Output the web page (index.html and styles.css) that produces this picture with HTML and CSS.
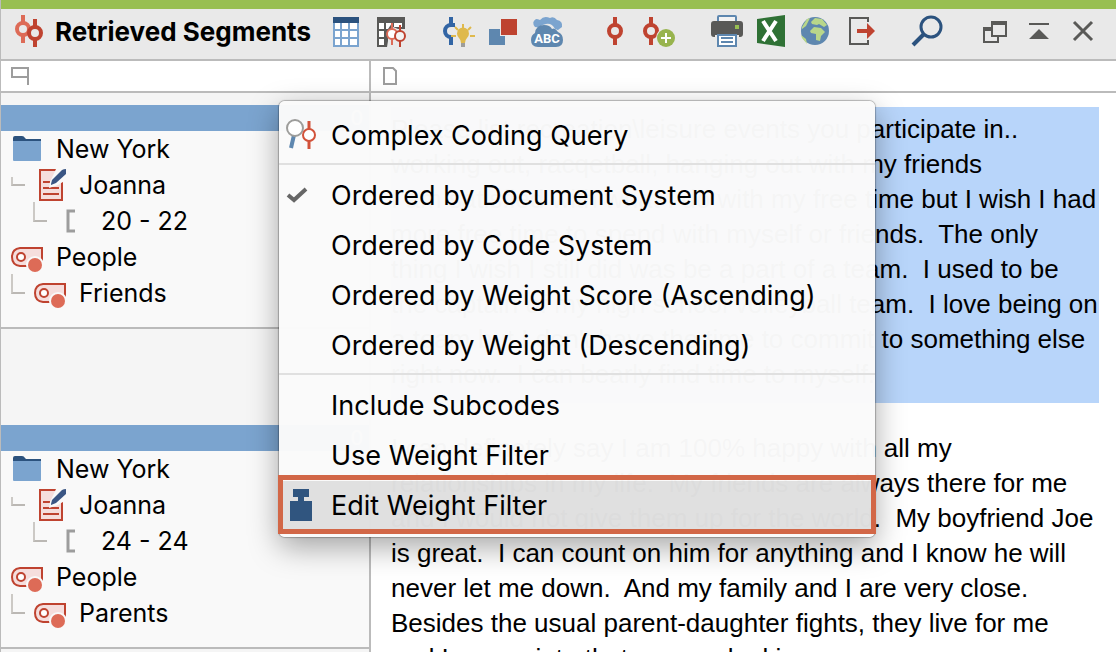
FILE: index.html
```html
<!DOCTYPE html>
<html lang="en">
<head>
    <meta charset="UTF-8">
    <meta name="viewport" content="width=device-width, initial-scale=1.0">
    <title>Retrieved Segments</title>
    <link rel="stylesheet" href="styles.css">
</head>
<body>
    <!-- shared icons -->
    <svg class="sprite" aria-hidden="true">
        <symbol id="folder" viewBox="0 0 32 32">
            <path d="M2 10V5q0-2 2-2h7q2 0 3 2l1 1h15v4z" fill="#2b527e"/>
            <path d="M2 8h28v19q0 1-1 1H3q-1 0-1-1z" fill="#7ba4cf"/>
        </symbol>
        <symbol id="document" viewBox="0 0 32 32">
            <path d="M6 1h22v30H6z" fill="#f5dedd" stroke="#bf4330" stroke-width="2"/>
            <path d="M9 13h7M9 19h16M9 25h16" stroke="#bf4330" stroke-width="2"/>
            <path d="M22 0h10v11l-8 5-9 3 1-6z" fill="#f9f9f9"/>
            <path d="M17 15l1-4L28 1q2-1 5-1v4L22 14l-5 2z" fill="#3b5684"/>
        </symbol>
        <symbol id="code" viewBox="0 0 32 32">
            <path d="M9 7h22v18H9q-8-1-8-9t8-9z" fill="#f5dedd" stroke="#bf4330" stroke-width="2"/>
            <circle cx="10" cy="16" r="4" fill="#fff" stroke="#bf4330" stroke-width="2"/>
            <circle cx="24" cy="24" r="9" fill="#f9f9f9"/>
            <circle cx="24" cy="24" r="7" fill="#dd6b57"/>
        </symbol>
        <symbol id="bracket" viewBox="0 0 32 32">
            <path d="M19 6h-7v20h7" fill="none" stroke="#9d9d9d" stroke-width="3"/>
        </symbol>
    </svg>

    <div class="app">
        <header class="toolbar">
            <div class="title">
                <svg width="32" height="32" viewBox="0 0 32 32" fill="none" stroke-width="4">
                    <path d="M10 0v8M10 20v8" stroke="#dd6b57"/>
                    <circle cx="10" cy="14" r="6" stroke="#dd6b57"/>
                    <path d="M22 4v8M22 24v8" stroke="#bf4330"/>
                    <circle cx="22" cy="18" r="6" stroke="#bf4330"/>
                </svg>
                <h1>Retrieved Segments</h1>
            </div>
            <div class="group">
                <button type="button" aria-label="Table">
                    <svg viewBox="0 0 32 32">
                        <path d="M2 4h26v28H2z" fill="#7ba4cf"/>
                        <path d="M2 2h26v6H2z" fill="#2b527e"/>
                        <path d="M4 8h5v6H4zM11 8h6v6h-6zM19 8h7v6h-7zM4 16h5v6H4zM11 16h6v6h-6zM19 16h7v6h-7zM4 24h5v6H4zM11 24h6v6h-6zM19 24h7v6h-7z" fill="#fff"/>
                    </svg>
                </button>
                <button type="button" aria-label="Code table">
                    <svg viewBox="0 0 32 32">
                        <path d="M2 2h28v12h-7l-5-2-5 6v8l-1 6H2z" fill="#595957"/>
                        <path d="M4 8h5v6H4zM11 8h6l-4 6h-2zM19 8h8v4h-8zM4 16h5v6H4zM4 24h5v6H4z" fill="#fff"/>
                        <path d="M17 8v6M17 24v6" stroke="#dd6b57" stroke-width="2"/>
                        <circle cx="17" cy="19" r="5" fill="#fff" stroke="#dd6b57" stroke-width="2"/>
                        <path d="M25 10v6M25 26v6" stroke="#bf4330" stroke-width="2"/>
                        <circle cx="25" cy="21" r="5" fill="#f4f4f4" stroke="#bf4330" stroke-width="2"/>
                    </svg>
                </button>
            </div>
            <div class="group">
                <button type="button" aria-label="Suggest codes">
                    <svg viewBox="0 0 32 32">
                        <path d="M8 2v8M8 22v8" stroke="#3265a4" stroke-width="4"/>
                        <path d="M12 10H8a6 6 0 0 0 0 12" fill="none" stroke="#3265a4" stroke-width="4"/>
                        <circle cx="20" cy="20" r="8" fill="#e9e9e9"/>
                        <path d="M20 9v5M12 12l3 3M28 12l-3 3M8 21h5M27 21h5" stroke="#dfb94c" stroke-width="2"/>
                        <path d="M18 28q0-3-2-5a6 6 0 1 1 8 0q-2 2-2 5z" fill="#dfb94c"/>
                        <path d="M18 28h4v4h-4z" fill="#9d9d9b"/>
                    </svg>
                </button>
                <button type="button" aria-label="Overlap">
                    <svg viewBox="0 0 32 32">
                        <path d="M2 14h16v16H2z" fill="#5e87af"/>
                        <path d="M13 3h18v18H13z" fill="#e9e9e9"/>
                        <path d="M14 4h16v16H14z" fill="#be4330"/>
                    </svg>
                </button>
                <button type="button" aria-label="Word cloud">
                    <svg viewBox="0 0 32 32">
                        <path d="M4 12q-4-5 1-8 2 0 4 1 4-5 10-2 4-2 7 2 6 1 5 7l-4 3z" fill="#7ba4cf"/>
                        <path d="M7 17q0-7 8-8 6-1 9 5 7 2 7 9v6H5z" fill="#e9e9e9"/>
                        <path d="M4 18q1-8 9-8 6 0 8 4 3-2 6 3 5 2 5 8 0 7-7 7H7q-7 0-7-7 0-5 4-7z" fill="#5e87af"/>
                        <text x="16" y="28" class="cloud-text">ABC</text>
                    </svg>
                </button>
            </div>
            <div class="group">
                <button type="button" aria-label="Code">
                    <svg viewBox="0 0 32 32" fill="none" stroke="#bf4330" stroke-width="4">
                        <path d="M16 2v8M16 22v8"/>
                        <circle cx="16" cy="16" r="6"/>
                    </svg>
                </button>
                <button type="button" aria-label="Add code">
                    <svg viewBox="0 0 32 32">
                        <path d="M8 2v8M8 22v8" stroke="#bf4330" stroke-width="4"/>
                        <circle cx="8" cy="16" r="6" fill="none" stroke="#bf4330" stroke-width="4"/>
                        <circle cx="23" cy="23" r="10" fill="#e9e9e9"/>
                        <circle cx="23" cy="23" r="9" fill="#98b44e"/>
                        <path d="M18 23h10M23 18v10" stroke="#fff" stroke-width="2"/>
                    </svg>
                </button>
            </div>
            <div class="group">
                <button type="button" aria-label="Print">
                    <svg viewBox="0 0 32 32">
                        <rect x="7" y="1" width="18" height="12" rx="1" fill="#f3f3f3" stroke="#5e87af" stroke-width="2"/>
                        <path d="M3 6h26q3 0 3 3v10q0 3-3 3h-1v-2H4v2H3q-3 0-3-3V9q0-3 3-3z" fill="#595957"/>
                        <path d="M24 10h4v4h-4z" fill="#98bf52"/>
                        <rect x="7" y="20" width="18" height="11" fill="#fff" stroke="#5e87af" stroke-width="2"/>
                        <path d="M10 23h12M10 27h12" stroke="#5e87af" stroke-width="2"/>
                    </svg>
                </button>
                <button type="button" aria-label="Export to Excel">
                    <svg viewBox="0 0 32 32">
                        <path d="M2 4L30 0v32L2 28z" fill="#2f7135"/>
                        <path d="M8 6l13 20M21 6L8 26" stroke="#fff" stroke-width="4"/>
                    </svg>
                </button>
                <button type="button" aria-label="Export to web">
                    <svg viewBox="0 0 32 32">
                        <circle cx="16" cy="16" r="14" fill="#5e87af"/>
                        <path d="M12 7l4-4 7 1 5 6-3 2-5-3-2 1-5-1zM11 16l4-4 7 1 4 4-4 4-1 5-4-1v-6l-5-1zM3 12l5-8 3-1-4 8-4 3zM2 20l5 4 1 5-5-6z" fill="#b9d78a"/>
                    </svg>
                </button>
                <button type="button" aria-label="Export">
                    <svg viewBox="0 0 32 32">
                        <path d="M25 7V3H7v26h18v-4" fill="none" stroke="#595957" stroke-width="2"/>
                        <path d="M14 14h10V8l8 8-8 8v-6H14z" fill="#bf4330"/>
                    </svg>
                </button>
            </div>
            <div class="group">
                <button type="button" aria-label="Search">
                    <svg viewBox="0 0 32 32" fill="none" stroke="#2b527e">
                        <circle cx="20" cy="12" r="10" stroke-width="3"/>
                        <path d="M13 19L2 30" stroke-width="4"/>
                    </svg>
                </button>
            </div>
            <div class="group">
                <button type="button" aria-label="Undock">
                    <svg viewBox="0 0 32 32" fill="#595957">
                        <path d="M4 12h8v4H6v10h12v-4h2v6H4z"/>
                        <path d="M12 6h16v16H12zM14 10v10h12V10z" fill-rule="evenodd"/>
                    </svg>
                </button>
                <button type="button" aria-label="Collapse">
                    <svg viewBox="0 0 32 32" fill="#595957">
                        <path d="M6 8h20v2H6zM16 14l10 10H6z"/>
                    </svg>
                </button>
                <button type="button" aria-label="Close">
                    <svg viewBox="0 0 32 32" stroke="#595957" stroke-width="3">
                        <path d="M7 7l18 18M25 7L7 25"/>
                    </svg>
                </button>
            </div>
        </header>

        <main class="panes">
            <aside class="sidebar">
                <div class="pane-head">
                    <svg width="18" height="18" viewBox="0 0 18 18" fill="none" stroke="#9d9d9d" stroke-width="2">
                        <path d="M17 18V1H1v9h16"/>
                    </svg>
                </div>
                <div class="segments">
                    <section class="segment">
                        <div class="segment-bar">0</div>
                        <ul>
                            <li><svg class="icon"><use href="#folder"/></svg>New York</li>
                            <li class="level-1 short"><svg class="icon"><use href="#document"/></svg>Joanna</li>
                            <li class="level-2"><svg class="icon"><use href="#bracket"/></svg>20 - 22</li>
                            <li><svg class="icon"><use href="#code"/></svg>People</li>
                            <li class="level-1"><svg class="icon"><use href="#code"/></svg>Friends</li>
                        </ul>
                    </section>
                    <section class="segment">
                        <div class="segment-bar">0</div>
                        <ul>
                            <li><svg class="icon"><use href="#folder"/></svg>New York</li>
                            <li class="level-1 short"><svg class="icon"><use href="#document"/></svg>Joanna</li>
                            <li class="level-2"><svg class="icon"><use href="#bracket"/></svg>24 - 24</li>
                            <li><svg class="icon"><use href="#code"/></svg>People</li>
                            <li class="level-1"><svg class="icon"><use href="#code"/></svg>Parents</li>
                        </ul>
                    </section>
                </div>
            </aside>

            <article class="content">
                <div class="pane-head">
                    <svg width="14" height="18" viewBox="0 0 14 18" fill="none" stroke="#9d9d9d" stroke-width="2">
                        <path d="M1 1h9l3 3v13H1z"/>
                    </svg>
                </div>
                <div class="text">
                    <p class="selected">Please list recreation\leisure events you participate in..<br>
                    working out, racqetball, hanging out with my friends<br>
                    I am satisfied with what I do with my free time but I wish I had<br>
                    more free time to spend with myself or friends.&nbsp; The only<br>
                    thing I wish I still did was be a part of a team.&nbsp; I used to be<br>
                    the captain of my high school volleyball team.&nbsp; I love being on<br>
                    a team but I don't have the time to commit to something else<br>
                    right now.&nbsp; I can bearly find time to myself.</p>
                    <p>I can definetely say I am 100% happy with all my<br>
                    relationships in my life.&nbsp; My friends are always there for me<br>
                    and I would not give them up for the world.&nbsp; My boyfriend Joe<br>
                    is great.&nbsp; I can count on him for anything and I know he will<br>
                    never let me down.&nbsp; And my family and I are very close.<br>
                    Besides the usual parent-daughter fights, they live for me<br>
                    and I appreciate that anyone looking</p>
                </div>
            </article>
        </main>

        <div class="menu" role="menu">
            <button type="button" role="menuitem">
                <svg viewBox="0 0 32 32">
                    <path d="M8 16L5 29" stroke="#5e87af" stroke-width="4"/>
                    <circle cx="9" cy="9" r="8" fill="#fff" stroke="#9d9d9b" stroke-width="2"/>
                    <path d="M23 2v8M23 22v8" stroke="#d2523a" stroke-width="3"/>
                    <circle cx="23" cy="16" r="6" fill="#fff" stroke="#d2523a" stroke-width="2"/>
                </svg>
                Complex Coding Query
            </button>
            <hr>
            <button type="button" role="menuitem">
                <svg viewBox="0 0 32 32">
                    <path d="M2 16l6 5L20 10" fill="none" stroke="#666" stroke-width="4"/>
                </svg>
                Ordered by Document System
            </button>
            <button type="button" role="menuitem">Ordered by Code System</button>
            <button type="button" role="menuitem">Ordered by Weight Score (Ascending)</button>
            <button type="button" role="menuitem">Ordered by Weight (Descending)</button>
            <hr>
            <button type="button" role="menuitem">Include Subcodes</button>
            <button type="button" role="menuitem">Use Weight Filter</button>
            <button type="button" role="menuitem" class="active">
                <svg viewBox="0 0 32 32" fill="#30557f">
                    <path d="M7 0h16v8h-5v4h8v20H4V12h8V8H7z"/>
                </svg>
                Edit Weight Filter
            </button>
        </div>
    </div>
</body>
</html>
```
FILE: styles.css
```css
* {
    box-sizing: border-box;
}
body {
    margin: 0;
    font-family: Inter, sans-serif;
    font-size: 25px;
    color: #000;
    background: #fff;
}
button {
    border: none;
    padding: 0;
    background: none;
    font: inherit;
    color: inherit;
}
.sprite {
    display: none;
}
.app {
    position: relative;
    display: flex;
    flex-direction: column;
    height: 100vh;
    overflow: hidden;
    border-left: 1px solid #bbb;
}

/* toolbar */
.toolbar {
    display: flex;
    gap: 24px;
    padding: 0 11px 6px 12px;
    border-top: 9px solid #98bf52;
    border-bottom: 2px solid #bbb;
    background: #e9e9e9;
}
.title {
    display: flex;
    flex: 1;
    align-items: center;
    gap: 10px;
    margin-right: -24px;
    white-space: nowrap;
}
h1 {
    margin: 0;
    font-size: 26px;
    font-weight: 700;
}
.group {
    display: flex;
}
.group button {
    display: flex;
    align-items: center;
    justify-content: center;
    width: 44px;
    height: 44px;
}
.group svg {
    width: 32px;
    height: 32px;
}
.cloud-text {
    font: bold 13px Roboto, sans-serif;
    fill: #fff;
    text-anchor: middle;
}

/* panes */
.panes {
    display: flex;
    flex: 1;
    min-height: 0;
}
.sidebar {
    flex: 0 0 370px;
    border-right: 2px solid #bbb;
    background: #f5f5f5;
}
.content {
    flex: 1;
    min-width: 0;
}
.pane-head {
    display: flex;
    align-items: center;
    height: 32px;
    padding-left: 10px;
    border-bottom: 2px solid #bbb;
    background: #fff;
}
.content .pane-head {
    padding-left: 12px;
}
.segments {
    display: flex;
    flex-direction: column;
    gap: 96px;
    padding-top: 12px;
}
.segment {
    padding-bottom: 16px;
    border-bottom: 2px solid #bbb;
    background: #f9f9f9;
}
.segment-bar {
    height: 26px;
    padding-right: 6px;
    background: #7ba4cf;
    color: #fff;
    font-size: 20px;
    line-height: 26px;
    text-align: right;
}
.segment ul {
    margin: 0;
    padding: 0;
    list-style: none;
}
.segment li {
    display: flex;
    align-items: center;
    gap: 13px;
    height: 36px;
    padding-left: 10px;
}
.segment .level-2 {
    padding-left: 32px;
}
/* tree connector */
.level-1::before,
.level-2::before {
    content: "";
    width: 12px;
    height: 18px;
    margin: -18px -4px 0 0;
    border-left: 2px solid #ccc9c5;
    border-bottom: 2px solid #bbb8b4;
}
.level-1.short::before {
    height: 7px;
    margin-top: -7px;
}
.icon {
    width: 32px;
    height: 32px;
}

.text {
    padding: 14px 17px 0 20px;
    font-family: "Liberation Sans", Arial, sans-serif;
    font-size: 26px;
    line-height: 35px;
    white-space: nowrap;
}
.text p {
    margin: 0;
}
.text .selected {
    margin-bottom: 28px;
    padding: 5px 0 11px;
    background: #b8d5fa;
}

/* popup menu */
.menu {
    position: absolute;
    top: 101px;
    left: 278px;
    width: 596px;
    padding: 10px 0 6px;
    border-radius: 6px;
    background: rgba(250, 250, 250, 0.98);
    box-shadow: 0 0 1px 1px rgba(0, 0, 0, 0.25), 0 10px 30px rgba(0, 0, 0, 0.35);
    font-size: 27px;
}
.menu button {
    display: flex;
    align-items: center;
    position: relative;
    width: 100%;
    height: 50px;
    padding: 0 0 2px 52px;
    text-align: left;
    white-space: nowrap;
}
.menu svg {
    position: absolute;
    left: 7px;
    width: 32px;
    height: 32px;
}
.menu hr {
    height: 2px;
    margin: 2px 0 6px;
    border: none;
    background: #e0e0e0;
}
.menu .active {
    background: rgba(0, 0, 0, 0.1);
}
/* frame around the highlighted item */
.menu .active::after {
    content: "";
    position: absolute;
    inset: -6px -1px -3px;
    border: 5px solid #d26747;
}
```
